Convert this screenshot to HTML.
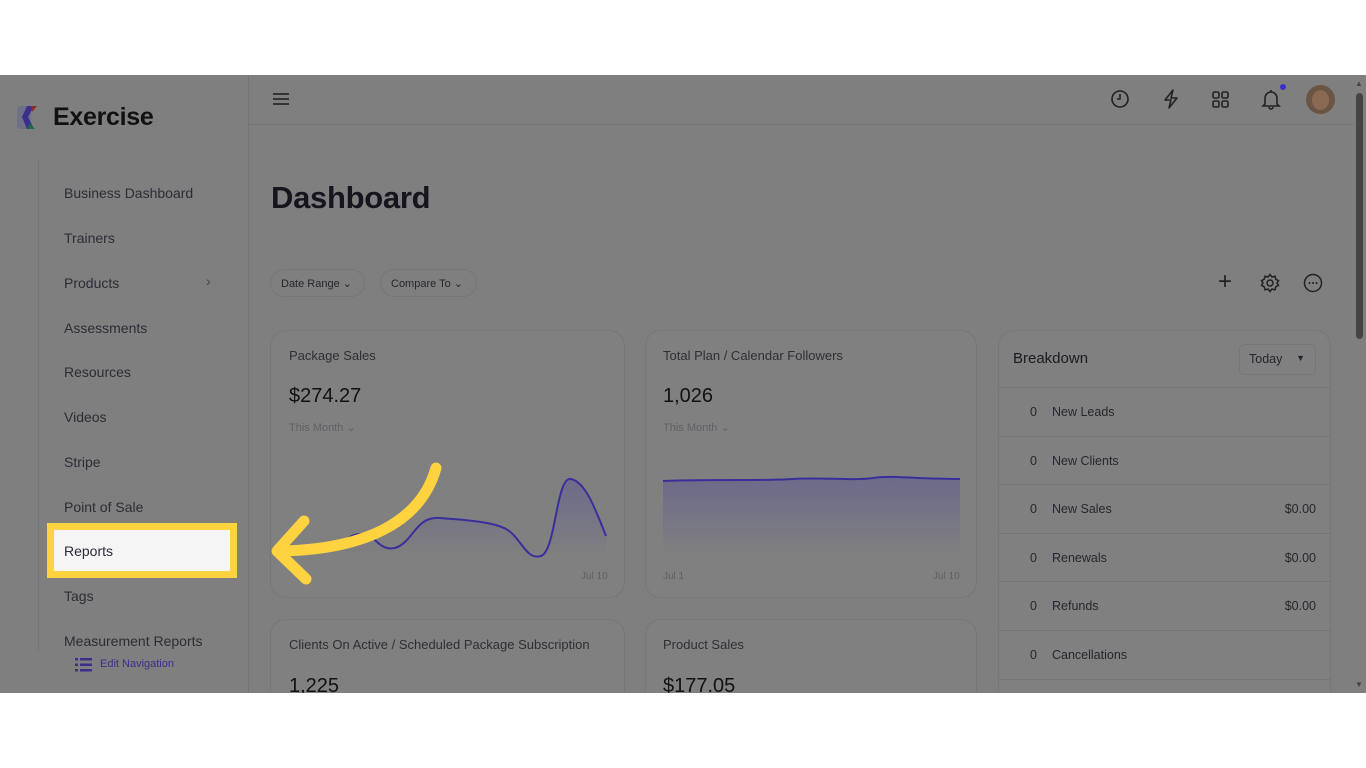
<!DOCTYPE html>
<html><head><meta charset="utf-8"><style>
*{margin:0;padding:0;box-sizing:border-box}
body{width:1366px;height:768px;background:#fff;font-family:"Liberation Sans",sans-serif;position:relative;overflow:hidden;color:#25252e}
.app{position:absolute;left:0;top:75px;width:1366px;height:618px;background:#7f7f7f;overflow:hidden}
.a{position:absolute;white-space:nowrap}
.nav{font-size:14px;color:#2c2c36}
.card{position:absolute;border:1px solid #777;border-radius:16px;background:#808080}
.sm{font-size:11px;color:#5f5f66}
.row{position:absolute;left:0;right:0;height:49px;border-top:1px solid #747474;font-size:12.5px;color:#26262e}
</style></head><body>
<div class="app">
  <div class="a" style="left:248px;top:0;width:1px;height:618px;background:#747474"></div>
  <svg class="a" style="left:17px;top:29px" width="27" height="27" viewBox="0 0 27 27">
    <rect x="0" y="2" width="14" height="23" rx="3" fill="#6e7086"/>
    <path d="M10 2l7 0-6 11 6 12-7 0-5-12z" fill="#3b2f8c"/>
    <path d="M14 2l6 0-5 6z" fill="#8a2c2c"/>
    <path d="M12 19l6 6-7 0z" fill="#1f6b4d"/>
  </svg>
  <div class="a" style="left:53px;top:28px;font-size:25px;color:#111;font-weight:bold;letter-spacing:-0.3px">Exercise</div>
  <div class="a" style="left:38px;top:86px;width:1px;height:490px;background:#747474"></div>
  <div class="a nav" style="left:64px;top:110px">Business Dashboard</div>
  <div class="a nav" style="left:64px;top:155px">Trainers</div>
  <div class="a nav" style="left:64px;top:200px">Products</div>
  <div class="a" style="left:206px;top:198px;font-size:14px;color:#444">&#8250;</div>
  <div class="a nav" style="left:64px;top:245px">Assessments</div>
  <div class="a nav" style="left:64px;top:289px">Resources</div>
  <div class="a nav" style="left:64px;top:334px">Videos</div>
  <div class="a nav" style="left:64px;top:379px">Stripe</div>
  <div class="a nav" style="left:64px;top:424px">Point of Sale</div>
  <div class="a" style="left:47px;top:448px;width:190px;height:55px;background:#ffd23f"></div>
  <div class="a" style="left:54px;top:455px;width:176px;height:41px;background:#f5f5f5"></div>
  <div class="a nav" style="left:64px;top:468px">Reports</div>
  <div class="a nav" style="left:64px;top:513px">Tags</div>
  <div class="a nav" style="left:64px;top:558px">Measurement Reports</div>
  <svg class="a" style="left:75px;top:583px" width="17" height="14" viewBox="0 0 17 14"><g fill="#3a2f8a"><rect x="0" y="0" width="3" height="2.5"/><rect x="5" y="0" width="12" height="2.5"/><rect x="0" y="5.5" width="3" height="2.5"/><rect x="5" y="5.5" width="12" height="2.5"/><rect x="0" y="11" width="3" height="2.5"/><rect x="5" y="11" width="12" height="2.5"/></g></svg>
  <div class="a" style="left:100px;top:583px;font-size:11px;color:#3a2f8a">Edit Navigation</div>

  <div class="a" style="left:249px;top:49px;width:1105px;height:1px;background:#747474"></div>
  <svg class="a" style="left:273px;top:17px" width="16" height="14"><g stroke="#222" stroke-width="1.6"><line x1="0" y1="2" x2="16" y2="2"/><line x1="0" y1="7" x2="16" y2="7"/><line x1="0" y1="12" x2="16" y2="12"/></g></svg>
  <svg class="a" style="left:1110px;top:14px" width="20" height="20" viewBox="0 0 20 20" fill="none" stroke="#222" stroke-width="1.6"><circle cx="10" cy="10" r="8"/><path d="M10 5v5h-3"/></svg>
  <svg class="a" style="left:1162px;top:14px" width="18" height="20" viewBox="0 0 18 20" fill="none" stroke="#222" stroke-width="1.6" stroke-linejoin="round"><path d="M11 1L3 11h6l-2 8 8-10H9z"/></svg>
  <svg class="a" style="left:1212px;top:16px" width="17" height="17" fill="none" stroke="#222" stroke-width="1.6"><rect x="1" y="1" width="6" height="6" rx="1.5"/><rect x="10" y="1" width="6" height="6" rx="1.5"/><rect x="1" y="10" width="6" height="6" rx="1.5"/><rect x="10" y="10" width="6" height="6" rx="1.5"/></svg>
  <svg class="a" style="left:1261px;top:13px" width="20" height="22" viewBox="0 0 20 22" fill="none" stroke="#222" stroke-width="1.6"><path d="M4 16V10a6 6 0 0 1 12 0v6l2 2H2z"/><path d="M8 19a2 2 0 0 0 4 0"/><path d="M10 2v2"/></svg>
  <div class="a" style="left:1280px;top:9px;width:6px;height:6px;border-radius:50%;background:#3b2fc4"></div>
  <div class="a" style="left:1306px;top:10px;width:29px;height:29px;border-radius:50%;background:#6a5444"></div>
  <div class="a" style="left:1312px;top:15px;width:17px;height:20px;border-radius:50%;background:#8a6a52"></div>
  <div class="a" style="left:1356px;top:18px;width:7px;height:246px;border-radius:4px;background:#444"></div>
  <div class="a" style="left:1355px;top:4px;font-size:8px;color:#444">&#9650;</div>
  <div class="a" style="left:1355px;top:605px;font-size:8px;color:#444">&#9660;</div>

  <div class="a" style="left:271px;top:105px;font-size:31px;color:#15151d;font-weight:bold;letter-spacing:-0.3px">Dashboard</div>
  <div class="a" style="left:270px;top:194px;width:95px;height:28px;border:1px solid #767676;border-radius:14px;font-size:11px;padding:7px 10px">Date Range &#8964;</div>
  <div class="a" style="left:380px;top:194px;width:97px;height:28px;border:1px solid #767676;border-radius:14px;font-size:11px;padding:7px 10px">Compare To &#8964;</div>
  <div class="a" style="left:1218px;top:193px;font-size:24px;color:#222">+</div>
  <svg class="a" style="left:1260px;top:198px" width="20" height="20" viewBox="0 0 20 20" fill="none" stroke="#222" stroke-width="1.5"><circle cx="10" cy="10" r="3"/><path d="M10 1.5l2 2.5 3-.8.8 3 2.7 1.5-1.5 2.3 1.5 2.3-2.7 1.5-.8 3-3-.8-2 2.5-2-2.5-3 .8-.8-3L1.5 12.3 3 10 1.5 7.7 4.2 6.2l.8-3 3 .8z"/></svg>
  <svg class="a" style="left:1303px;top:198px" width="20" height="20" fill="none" stroke="#222" stroke-width="1.5"><circle cx="10" cy="10" r="8.5"/><g fill="#222" stroke="none"><circle cx="6.5" cy="10" r="1"/><circle cx="10" cy="10" r="1"/><circle cx="13.5" cy="10" r="1"/></g></svg>

  <div class="card" style="left:270px;top:255px;width:355px;height:268px">
    <div class="a" style="left:18px;top:17px;font-size:13px;color:#2e2e36">Package Sales</div>
    <div class="a" style="left:18px;top:54px;font-size:20px;color:#111">$274.27</div>
    <div class="a sm" style="left:18px;top:90px">This Month &#8964;</div>
    <svg class="a" style="left:0;top:130px" width="355" height="100" viewBox="270 460 355 100">
      <defs><linearGradient id="g" x1="0" y1="0" x2="0" y2="1"><stop offset="0" stop-color="#6c6a8a"/><stop offset="1" stop-color="#808080"/></linearGradient></defs>
      <path d="M340 545C350 530 365 530 375 540S395 550 405 540S420 515 440 517S490 520 505 528S525 560 540 555S555 475 570 478S595 510 605 535V555H340z" fill="url(#g)"/>
      <path d="M340 545C350 530 365 530 375 540S395 550 405 540S420 515 440 517S490 520 505 528S525 560 540 555S555 475 570 478S595 510 605 535" fill="none" stroke="#3a2f9a" stroke-width="2"/>
    </svg>
    <div class="a sm" style="left:310px;top:240px;font-size:10px">Jul 10</div>
  </div>
  <div class="card" style="left:645px;top:255px;width:332px;height:268px">
    <div class="a" style="left:17px;top:17px;font-size:13px;color:#2e2e36">Total Plan / Calendar Followers</div>
    <div class="a" style="left:17px;top:54px;font-size:20px;color:#111">1,026</div>
    <div class="a sm" style="left:17px;top:90px">This Month &#8964;</div>
    <svg class="a" style="left:17px;top:140px" width="297" height="85" viewBox="0 0 297 85">
      <defs><linearGradient id="h" x1="0" y1="0" x2="0" y2="1"><stop offset="0" stop-color="#6c6a8a"/><stop offset="1" stop-color="#808080"/></linearGradient></defs>
      <path d="M0 10C60 8 100 10 130 8S190 10 210 7S250 8 297 8V85H0z" fill="url(#h)"/>
      <path d="M0 10C60 8 100 10 130 8S190 10 210 7S250 8 297 8" fill="none" stroke="#3a2f9a" stroke-width="2"/>
    </svg>
    <div class="a sm" style="left:17px;top:240px;font-size:10px">Jul 1</div>
    <div class="a sm" style="left:287px;top:240px;font-size:10px">Jul 10</div>
  </div>
  <div class="card" style="left:998px;top:255px;width:333px;height:400px;overflow:hidden">
    <div class="a" style="left:14px;top:19px;font-size:15px;color:#1a1a22">Breakdown</div>
    <div class="a" style="left:240px;top:13px;width:77px;height:31px;border:1px solid #767676;border-radius:5px;font-size:12.5px;padding:7px 9px">Today<span style="position:absolute;right:10px;top:8px;font-size:9px">&#9660;</span></div>
    <div class="row" style="top:56px"><span class="a" style="left:31px;top:17px">0</span><span class="a" style="left:53px;top:17px">New Leads</span></div>
    <div class="row" style="top:105px"><span class="a" style="left:31px;top:17px">0</span><span class="a" style="left:53px;top:17px">New Clients</span></div>
    <div class="row" style="top:153px"><span class="a" style="left:31px;top:17px">0</span><span class="a" style="left:53px;top:17px">New Sales</span><span class="a" style="right:14px;top:17px">$0.00</span></div>
    <div class="row" style="top:202px"><span class="a" style="left:31px;top:17px">0</span><span class="a" style="left:53px;top:17px">Renewals</span><span class="a" style="right:14px;top:17px">$0.00</span></div>
    <div class="row" style="top:250px"><span class="a" style="left:31px;top:17px">0</span><span class="a" style="left:53px;top:17px">Refunds</span><span class="a" style="right:14px;top:17px">$0.00</span></div>
    <div class="row" style="top:299px"><span class="a" style="left:31px;top:17px">0</span><span class="a" style="left:53px;top:17px">Cancellations</span></div>
    <div class="row" style="top:348px"></div>
  </div>
  <div class="card" style="left:270px;top:544px;width:355px;height:120px">
    <div class="a" style="left:18px;top:17px;font-size:13px;color:#2e2e36">Clients On Active / Scheduled Package Subscription</div>
    <div class="a" style="left:18px;top:55px;font-size:20px;color:#111">1,225</div>
  </div>
  <div class="card" style="left:645px;top:544px;width:332px;height:120px">
    <div class="a" style="left:17px;top:17px;font-size:13px;color:#2e2e36">Product Sales</div>
    <div class="a" style="left:17px;top:55px;font-size:20px;color:#111">$177.05</div>
  </div>
  <svg class="a" style="left:0;top:-75px" width="1366" height="768">
    <g fill="none" stroke="#ffd23f" stroke-width="11" stroke-linecap="round" stroke-linejoin="round">
      <path d="M436 468C420 525 360 550 278 551"/>
      <path d="M304 521L277 551L306 579"/>
    </g>
  </svg>
</div>
</body></html>
